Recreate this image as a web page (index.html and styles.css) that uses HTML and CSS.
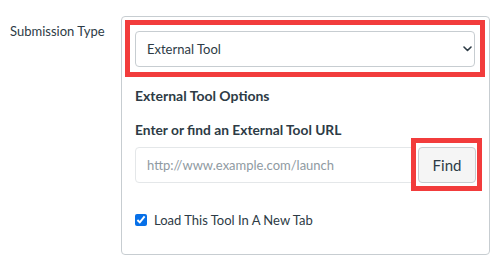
FILE: index.html
```html
<!DOCTYPE html>
<html lang="en">
<head>
    <meta charset="UTF-8">
    <meta name="viewport" content="width=device-width, initial-scale=1.0">
    <title>Submission Type</title>
    <link rel="stylesheet" href="styles.css">
</head>
<body>

    <div class="form-row">
        <label class="row-label" for="submission_type">Submission Type</label>

        <div class="panel">
            <div class="highlight">
                <div class="select-wrap">
                    <select id="submission_type" class="select">
                        <option>External Tool</option>
                    </select>
                    <svg class="chevron" width="9" height="6" viewBox="0 0 9 6">
                        <path d="M1 1 L4.5 4.5 L8 1" fill="none" stroke="#2d3b45" stroke-width="1.6" stroke-linecap="round" stroke-linejoin="round"/>
                    </svg>
                </div>
            </div>

            <div class="panel-body">
                <h3 class="options-title">External Tool Options</h3>
                <h2 class="url-title">Enter or find an External Tool URL</h2>

                <div class="url-row">
                    <input class="url-input" type="text" placeholder="http://www.example.com/launch">
                    <div class="find-wrap">
                        <button class="find-btn">Find</button>
                        <span class="find-mark"></span>
                    </div>
                </div>

                <label class="check-row">
                    <input type="checkbox" class="check" checked>
                    <span>Load This Tool In A New Tab</span>
                </label>
            </div>
        </div>
    </div>

</body>
</html>
```

FILE: styles.css
```css
/* Canvas-like assignment form */
body {
    margin: 0;
    background-color: #ffffff;
    color: #2d3b45;
    font-family: Lato, "Noto Sans", "Liberation Sans", sans-serif;
    font-size: 13px;
    line-height: 20px;
}
.form-row {
    display: flex;
    align-items: flex-start;
    padding: 16px 10px 0 10px;
}
.row-label {
    width: 111px;
    flex-shrink: 0;
    padding-top: 5px;
    color: #2d3b45;
}
.panel {
    width: 367px;
    height: 237px;
    border: 1px solid #c7cdd1;
    border-radius: 4px;
}
.highlight {
    margin: 3px 4px 0 3px;
    padding: 6px 5px 5px 5px;
    border: 5px solid #f23c3c;
}
.select-wrap {
    position: relative;
}
.select {
    display: block;
    width: 100%;
    height: 36px;
    margin: 0;
    padding: 0 11px;
    border: 1px solid #c7cdd1;
    border-radius: 4px;
    background-color: #ffffff;
    color: #2d3b45;
    font-family: inherit;
    font-size: 13px;
    appearance: none;
    -webkit-appearance: none;
}
.chevron {
    position: absolute;
    right: 3px;
    top: 15px;
}
.panel-body {
    padding: 9px 13px 0 13px;
}
.options-title {
    margin: 0;
    font-size: 14px;
    line-height: 20px;
    font-weight: 700;
}
.url-title {
    margin: 13px 0 0 0;
    font-size: 13.75px;
    line-height: 22px;
    font-weight: 700;
}
.url-row {
    display: flex;
    gap: 3px;
    margin-top: 6px;
}
.url-input {
    flex: 1;
    min-width: 0;
    height: 36px;
    box-sizing: border-box;
    margin: 0;
    padding: 0 11px;
    border: 1px solid #e4e7e9;
    border-radius: 4px;
    font-family: inherit;
    font-size: 13px;
    color: #2d3b45;
}
.url-input::placeholder {
    color: #8f9aa2;
}
.find-wrap {
    position: relative;
}
.find-btn {
    display: block;
    width: 58px;
    height: 36px;
    margin: 0;
    padding: 0;
    border: 1px solid #c7cdd1;
    border-radius: 4px;
    background-color: #f5f5f5;
    color: #2d3b45;
    font-family: inherit;
    font-size: 15px;
}
.find-mark {
    position: absolute;
    left: -7px;
    top: -9px;
    right: -6px;
    bottom: -8px;
    border: 5px solid #f23c3c;
}
.check-row {
    display: flex;
    align-items: center;
    gap: 7px;
    margin-top: 27px;
}
.check {
    width: 12px;
    height: 12px;
    margin: 0;
    accent-color: #0770e8;
}
```
